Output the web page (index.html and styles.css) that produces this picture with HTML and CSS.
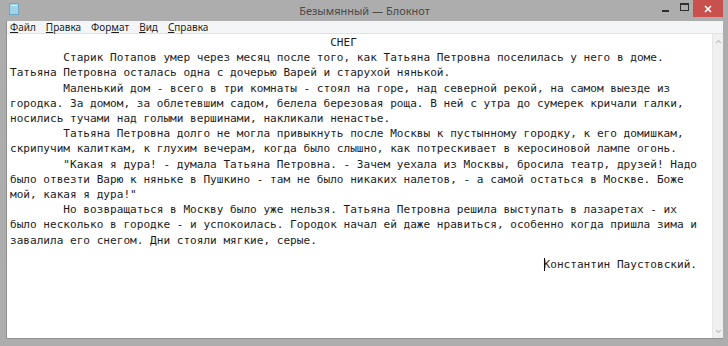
FILE: index.html
```html
<!DOCTYPE html>
<html lang="ru">
<head>
    <meta charset="UTF-8">
    <meta name="viewport" content="width=device-width, initial-scale=1.0">
    <link rel="stylesheet" href="styles.css">
</head>
<body>
    <div class="window">
        <div class="titlebar">
            <svg class="app-icon" width="10" height="12" viewBox="0 0 10 12">
                <rect x="0.5" y="0.5" width="9" height="11" fill="#9fd3ea" stroke="#6aa9c6"/>
                <rect x="2" y="2" width="6" height="1" fill="#d8f0fa"/>
            </svg>
            <div class="title">Безымянный — Блокнот</div>
            <div class="controls">
                <span class="btn-min"></span>
                <span class="btn-max"></span>
                <span class="btn-close">
                    <svg width="8" height="8" viewBox="0 0 8 8">
                        <path d="M1 1 L7 7 M7 1 L1 7" stroke="#fff" stroke-width="1.6"/>
                    </svg>
                </span>
            </div>
        </div>
        <div class="client">
            <div class="menubar">
                <span class="menu-item"><u>Ф</u>айл</span>
                <span class="menu-item"><u>П</u>равка</span>
                <span class="menu-item">Фор<u>м</u>ат</span>
                <span class="menu-item"><u>В</u>ид</span>
                <span class="menu-item"><u>С</u>правка</span>
            </div>
            <div class="editor">
                <pre class="text">						СНЕГ
	Старик Потапов умер через месяц после того, как Татьяна Петровна поселилась у него в доме.
Татьяна Петровна осталась одна с дочерью Варей и старухой нянькой.
	Маленький дом - всего в три комнаты - стоял на горе, над северной рекой, на самом выезде из
городка. За домом, за облетевшим садом, белела березовая роща. В ней с утра до сумерек кричали галки,
носились тучами над голыми вершинами, накликали ненастье.
	Татьяна Петровна долго не могла привыкнуть после Москвы к пустынному городку, к его домишкам,
скрипучим калиткам, к глухим вечерам, когда было слышно, как потрескивает в керосиновой лампе огонь.
	"Какая я дура! - думала Татьяна Петровна. - Зачем уехала из Москвы, бросила театр, друзей! Надо
было отвезти Варю к няньке в Пушкино - там не было никаких налетов, - а самой остаться в Москве. Боже
мой, какая я дура!"
	Но возвращаться в Москву было уже нельзя. Татьяна Петровна решила выступать в лазаретах - их
было несколько в городке - и успокоилась. Городок начал ей даже нравиться, особенно когда пришла зима и
завалила его снегом. Дни стояли мягкие, серые.
<span class="signature">										<span class="caret"></span>Константин Паустовский.</span></pre>
                <div class="scrollbar">
                    <svg width="7" height="5" viewBox="0 0 7 5">
                        <path d="M1 4 L3.5 1.5 L6 4" fill="none" stroke="#c2c2c2" stroke-width="1.2"/>
                    </svg>
                    <svg width="7" height="5" viewBox="0 0 7 5">
                        <path d="M1 1 L3.5 3.5 L6 1" fill="none" stroke="#c2c2c2" stroke-width="1.2"/>
                    </svg>
                </div>
            </div>
        </div>
    </div>
</body>
</html>
```

FILE: styles.css
```css
body {
    margin: 0;
    background: #adadad;
}
.window {
    width: 728px;
    height: 346px;
    background: #adadad;
    display: flex;
    flex-direction: column;
    box-sizing: border-box;
    padding: 0 5px 7px 6px;
}
.titlebar {
    height: 21px;
    display: flex;
    align-items: center;
    position: relative;
    flex-shrink: 0;
}
.app-icon {
    margin-left: 3px;
    margin-top: -3px;
}
.title {
    position: absolute;
    left: 0;
    right: 0;
    top: 3px;
    text-align: center;
    font-family: "Noto Sans", sans-serif;
    font-size: 11px;
    color: #4a4a4a;
    pointer-events: none;
}
.controls {
    margin-left: auto;
    display: flex;
    align-self: flex-start;
    height: 17px;
}
.btn-min {
    width: 7px;
    height: 2px;
    background: #2e2e2e;
    margin: 10px 11px 0 0;
}
.btn-max {
    width: 7px;
    height: 5px;
    border: 1px solid #2e2e2e;
    border-top-width: 2px;
    margin: 3px 4px 0 0;
}
.btn-close {
    width: 30px;
    height: 17px;
    background: #c9514d;
    display: flex;
    align-items: center;
    justify-content: center;
}
.client {
    flex: 1;
    display: flex;
    flex-direction: column;
    border-left: 1px solid #8f8f8f;
    border-bottom: 1px solid #8f8f8f;
    min-height: 0;
}
.menubar {
    height: 12px;
    background: #f4f5f7;
    border-bottom: 1px solid #dde2e8;
    display: flex;
    align-items: center;
    font-family: "Noto Sans", sans-serif;
    font-size: 10px;
    color: #1e1e1e;
    padding-left: 3px;
    gap: 10px;
}
.menu-item u {
    text-decoration-thickness: 1px;
    text-underline-offset: 1px;
}
.editor {
    flex: 1;
    display: flex;
    background: #fff;
    min-height: 0;
}
.text {
    flex: 1;
    margin: 0;
    padding: 1px 0 0 3px;
    font-family: "DejaVu Sans Mono", monospace;
    font-size: 11.08px;
    line-height: 15.2px;
    color: #1c1c1c;
    tab-size: 8;
    white-space: pre;
    overflow: hidden;
}
.signature {
    display: block;
    margin-top: 9px;
}
.caret {
    display: inline-block;
    width: 1px;
    height: 13px;
    background: #000;
    vertical-align: -3px;
    margin-right: -1px;
}
.scrollbar {
    width: 10px;
    background: #f0f0f0;
    border-left: 1px solid #e6e6e6;
    display: flex;
    flex-direction: column;
    justify-content: space-between;
    align-items: center;
    padding: 5px 0 4px;
}
```
